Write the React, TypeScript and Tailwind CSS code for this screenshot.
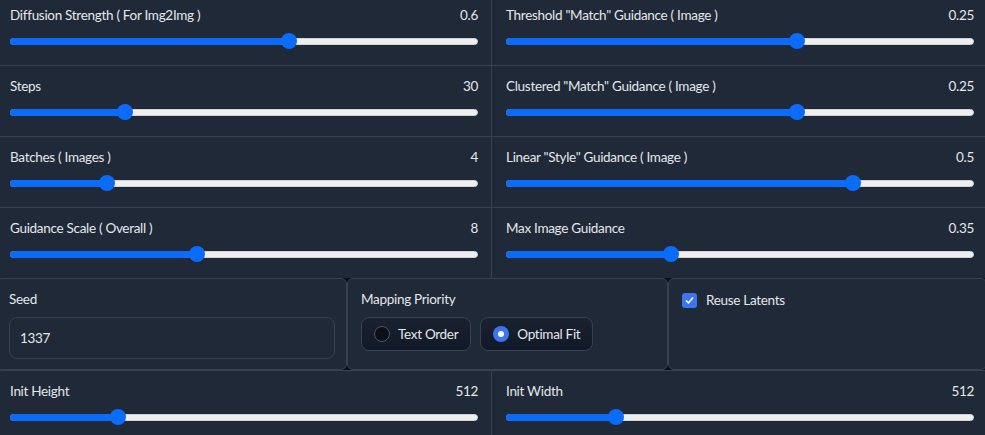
import * as React from 'react';

type SliderSpec = {
  label: string;
  value: string;
  fraction: number;
};

const gridRows: [SliderSpec, SliderSpec][] = [
  [
    { label: 'Diffusion Strength ( For Img2Img )', value: '0.6', fraction: 0.6 },
    { label: 'Threshold "Match" Guidance ( Image )', value: '0.25', fraction: 0.626 },
  ],
  [
    { label: 'Steps', value: '30', fraction: 0.237 },
    { label: 'Clustered "Match" Guidance ( Image )', value: '0.25', fraction: 0.626 },
  ],
  [
    { label: 'Batches ( Images )', value: '4', fraction: 0.197 },
    { label: 'Linear "Style" Guidance ( Image )', value: '0.5', fraction: 0.75 },
  ],
  [
    { label: 'Guidance Scale ( Overall )', value: '8', fraction: 0.396 },
    { label: 'Max Image Guidance', value: '0.35', fraction: 0.347 },
  ],
];

const bottomRow: SliderSpec[] = [
  { label: 'Init Height', value: '512', fraction: 0.221 },
  { label: 'Init Width', value: '512', fraction: 0.225 },
];

function Slider({ fraction }: { fraction: number }) {
  // thumb is 16px wide; its centre runs from 8px to width - 8px
  const thumbLeft = `calc(${fraction} * (100% - 16px))`;
  const fillWidth = `calc(${fraction} * (100% - 16px) + 8px)`;

  return (
    <div className="relative h-4 w-full">
      <div className="absolute top-[5px] right-0 left-0 h-[7px] rounded-full border border-[#d4d4d4] bg-[#efefef]" />
      <div
        className="absolute top-[5px] left-0 h-[7px] rounded-full bg-[#0b6cf9]"
        style={{ width: fillWidth }}
      />
      <div
        className="absolute top-0 h-4 w-4 rounded-full bg-[#0b6cf9]"
        style={{ left: thumbLeft }}
      />
    </div>
  );
}

function SliderBlock({ spec }: { spec: SliderSpec }) {
  return (
    <div className="flex h-[70px] flex-col bg-[#1f2937] pt-[10px] pr-[13px] pl-[14px]">
      <div className="flex h-5 items-center justify-between text-[13.5px] text-[#e5e7eb]">
        <span>{spec.label}</span>
        <span>{spec.value}</span>
      </div>
      <div className="mt-[8px]">
        <Slider fraction={spec.fraction} />
      </div>
    </div>
  );
}

function RadioOption({ label, checked }: { label: string; checked: boolean }) {
  return (
    <div className="flex h-[34px] items-center gap-2 rounded-lg border border-[#374151] bg-gradient-to-b from-[#1a2230] to-[#111827] px-[12px] text-[13.5px] text-[#e5e7eb]">
      {checked ? (
        <span className="flex h-4 w-4 items-center justify-center rounded-full bg-[#3b76f0]">
          <span className="h-[6px] w-[6px] rounded-full bg-white" />
        </span>
      ) : (
        <span className="h-4 w-4 rounded-full border border-[#4b5563] bg-[#0b0f19]" />
      )}
      <span>{label}</span>
    </div>
  );
}

export default function App() {
  return (
    <div
      className="h-[435px] w-[985px] overflow-hidden bg-[#0b0f19] tracking-[-0.3px]"
      style={{ fontFamily: 'Lato, "Noto Sans", sans-serif' }}
    >
      <div className="mt-[-5px] ml-[-4px] w-[991px]">
        <div className="grid grid-cols-2 gap-px bg-[#374151]">
          {gridRows.map(([left, right]) => (
            <React.Fragment key={left.label}>
              <SliderBlock spec={left} />
              <SliderBlock spec={right} />
            </React.Fragment>
          ))}
        </div>

        <div className="flex h-[92px]">
          <div className="w-[351px] rounded-[6px] border border-[#374151] bg-[#1f2937] pt-[10px] pr-[11px] pl-[12px]">
            <div className="h-5 text-[13.5px] leading-5 text-[#e5e7eb]">Seed</div>
            <div className="mt-[8px] flex h-[42px] items-center rounded-lg border border-[#374151] bg-[#1f2937] px-[10px] text-[13.5px] text-[#e5e7eb]">
              1337
            </div>
          </div>
          <div className="w-[321px] rounded-[6px] border border-[#374151] bg-[#1f2937] pt-[10px] pl-[13px]">
            <div className="h-5 text-[13.5px] leading-5 text-[#e5e7eb]">Mapping Priority</div>
            <div className="mt-[8px] flex gap-[9px]">
              <RadioOption label="Text Order" checked={false} />
              <RadioOption label="Optimal Fit" checked />
            </div>
          </div>
          <div className="flex-1 rounded-[6px] border border-[#374151] bg-[#1f2937] pt-[11px] pl-[13px]">
            <div className="flex items-center gap-[9px] text-[13.5px] text-[#e5e7eb]">
              <span className="flex h-[15px] w-[15px] items-center justify-center rounded-[3px] bg-[#3b76f0]">
                <svg viewBox="0 0 16 16" className="h-[11px] w-[11px]" fill="none">
                  <path
                    d="M3.5 8.5l3 3 6-7"
                    stroke="white"
                    strokeWidth="2.2"
                    strokeLinecap="round"
                    strokeLinejoin="round"
                  />
                </svg>
              </span>
              <span>Reuse Latents</span>
            </div>
          </div>
        </div>

        <div className="grid grid-cols-2 gap-px bg-[#374151] pt-px">
          {bottomRow.map((spec) => (
            <SliderBlock key={spec.label} spec={spec} />
          ))}
        </div>
      </div>
    </div>
  );
}
